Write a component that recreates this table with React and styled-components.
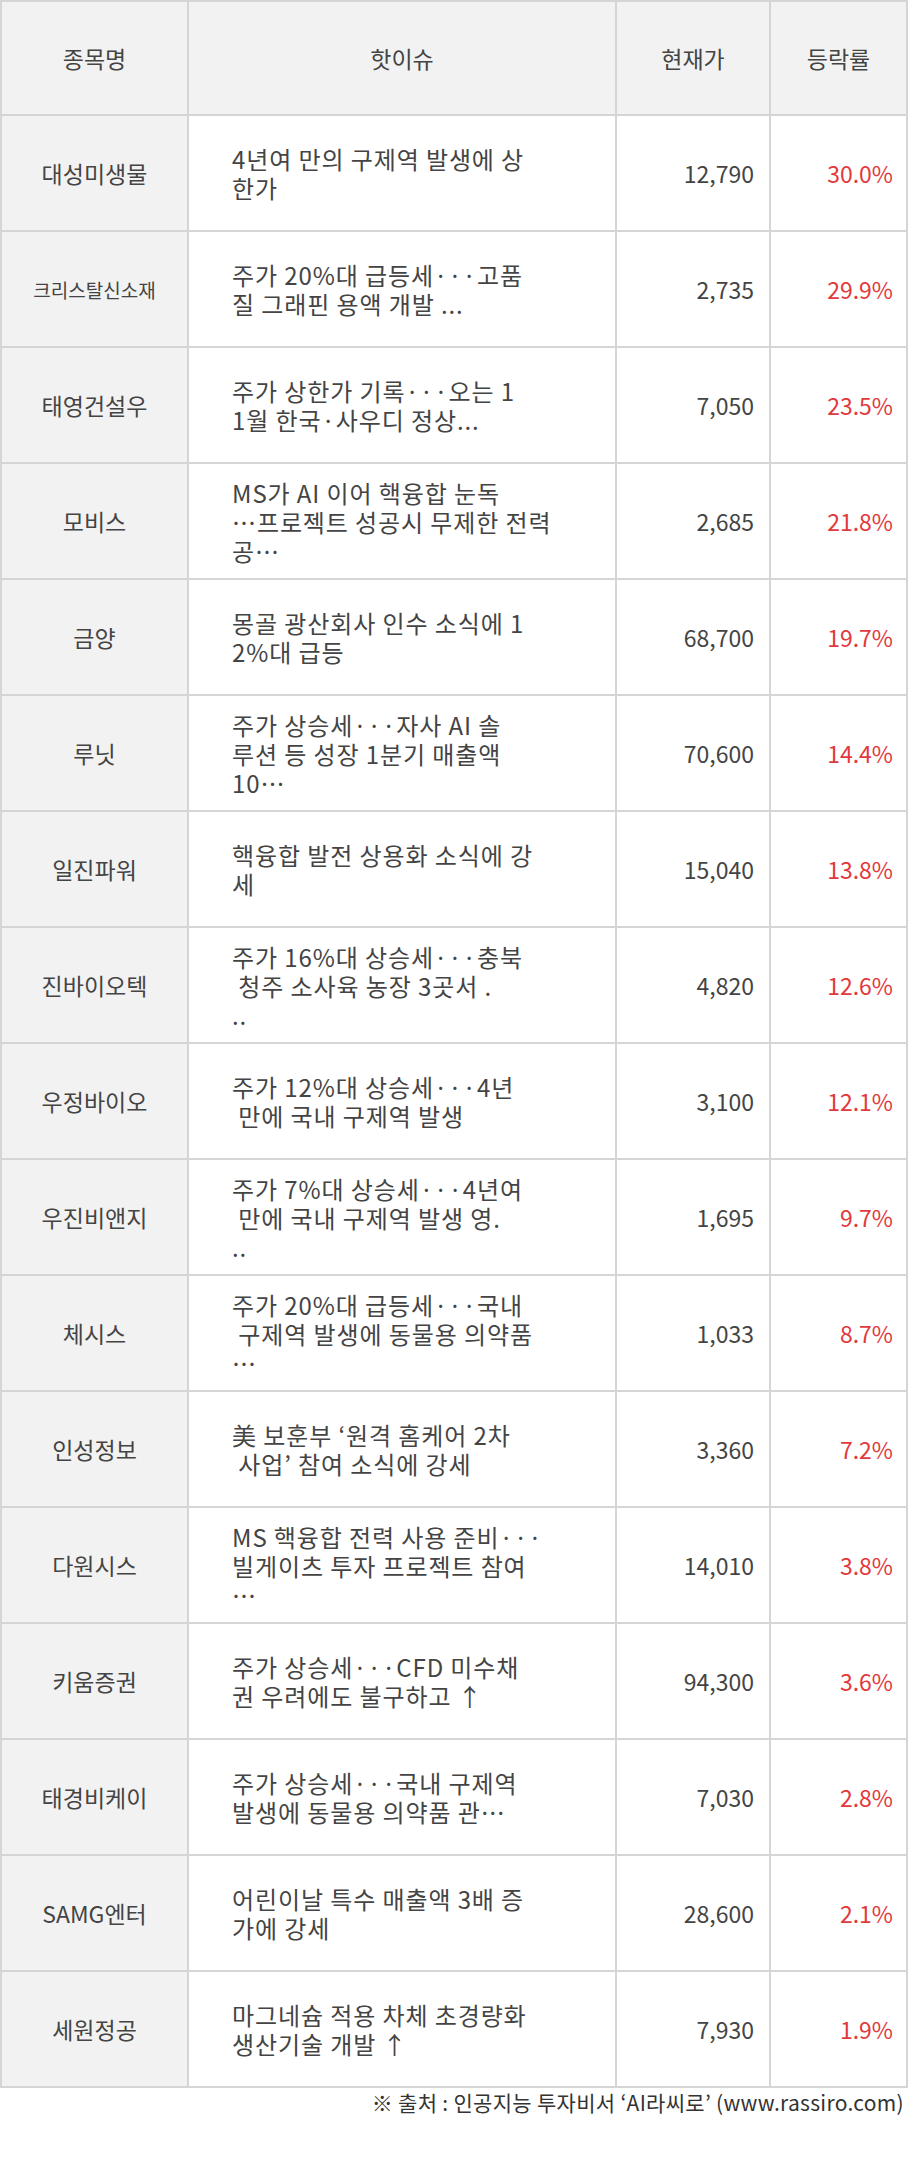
import React from "react";
import styled, { createGlobalStyle } from "styled-components";

const GlobalStyle = createGlobalStyle`
  body {
    margin: 0;
    background: #fff;
    font-family: "Noto Sans CJK KR", "Noto Sans", sans-serif;
    color: #444;
  }
`;

const rows = [
  ["대성미생물", ["4년여 만의 구제역 발생에 상", "한가"], "12,790", "30.0%"],
  ["크리스탈신소재", ["주가 20%대 급등세···고품", "질 그래핀 용액 개발 ..."], "2,735", "29.9%", true],
  ["태영건설우", ["주가 상한가 기록···오는 1", "1월 한국·사우디 정상..."], "7,050", "23.5%"],
  ["모비스", ["MS가 AI 이어 핵융합 눈독", "…프로젝트 성공시 무제한 전력", "공…"], "2,685", "21.8%"],
  ["금양", ["몽골 광산회사 인수 소식에 1", "2%대 급등"], "68,700", "19.7%"],
  ["루닛", ["주가 상승세···자사 AI 솔", "루션 등 성장 1분기 매출액", "10…"], "70,600", "14.4%"],
  ["일진파워", ["핵융합 발전 상용화 소식에 강", "세"], "15,040", "13.8%"],
  ["진바이오텍", ["주가 16%대 상승세···충북", " 청주 소사육 농장 3곳서 .", ".."], "4,820", "12.6%"],
  ["우정바이오", ["주가 12%대 상승세···4년", " 만에 국내 구제역 발생"], "3,100", "12.1%"],
  ["우진비앤지", ["주가 7%대 상승세···4년여", " 만에 국내 구제역 발생 영.", ".."], "1,695", "9.7%"],
  ["체시스", ["주가 20%대 급등세···국내", " 구제역 발생에 동물용 의약품", "…"], "1,033", "8.7%"],
  ["인성정보", ["美 보훈부 ‘원격 홈케어 2차", " 사업’ 참여 소식에 강세"], "3,360", "7.2%"],
  ["다원시스", ["MS 핵융합 전력 사용 준비···", "빌게이츠 투자 프로젝트 참여", "…"], "14,010", "3.8%"],
  ["키움증권", ["주가 상승세···CFD 미수채", "권 우려에도 불구하고 ↑"], "94,300", "3.6%"],
  ["태경비케이", ["주가 상승세···국내 구제역", "발생에 동물용 의약품 관…"], "7,030", "2.8%"],
  ["SAMG엔터", ["어린이날 특수 매출액 3배 증", "가에 강세"], "28,600", "2.1%"],
  ["세원정공", ["마그네슘 적용 차체 초경량화", "생산기술 개발 ↑"], "7,930", "1.9%"],
];

const Page = styled.div`
  width: 908px;
`;

const Table = styled.div`
  border-top: 2px solid #d5d5d5;
  border-left: 2px solid #d5d5d5;
`;

const Row = styled.div`
  display: grid;
  grid-template-columns: 187px 428px 154px 137px;
  height: ${(p) => (p.$head ? 114 : 116)}px;
`;

const Cell = styled.div`
  display: flex;
  align-items: center;
  justify-content: ${(p) => p.$align || "center"};
  box-sizing: border-box;
  border-right: 2px solid #d5d5d5;
  border-bottom: 2px solid #d5d5d5;
  background: ${(p) => (p.$grey ? "#f2f2f2" : "#fff")};
  padding: ${(p) => p.$pad || "0"};
  font-size: ${(p) => (p.$small ? 19 : 23)}px;
  color: ${(p) => (p.$red ? "#e2393d" : "#444")};
`;

const Issue = styled.div`
  display: flex;
  flex-direction: column;
  line-height: 29px;
  font-size: 24px;
  letter-spacing: 0.9px;
`;

const Line = styled.span`
  white-space: pre;
`;

const Source = styled.div`
  text-align: right;
  padding-right: 4px;
  font-size: 21px;
  letter-spacing: 0.3px;
  line-height: 26px;
  color: #333;
  margin-top: 1px;
`;

export default function App() {
  return (
    <Page>
      <GlobalStyle />
      <Table>
        <Row $head>
          <Cell $grey>종목명</Cell>
          <Cell $grey>핫이슈</Cell>
          <Cell $grey>현재가</Cell>
          <Cell $grey>등락률</Cell>
        </Row>
        {rows.map(([name, issue, price, rate, small]) => (
          <Row key={name}>
            <Cell $grey $small={small}>
              {name}
            </Cell>
            <Cell $align="flex-start" $pad="0 0 0 43px">
              <Issue>
                {issue.map((l, i) => (
                  <Line key={i}>{l}</Line>
                ))}
              </Issue>
            </Cell>
            <Cell $align="flex-end" $pad="0 15px 0 0">
              {price}
            </Cell>
            <Cell $align="flex-end" $pad="0 13px 0 0" $red>
              {rate}
            </Cell>
          </Row>
        ))}
      </Table>
      <Source>※ 출처 : 인공지능 투자비서 ‘AI라씨로’ (www.rassiro.com)</Source>
    </Page>
  );
}
